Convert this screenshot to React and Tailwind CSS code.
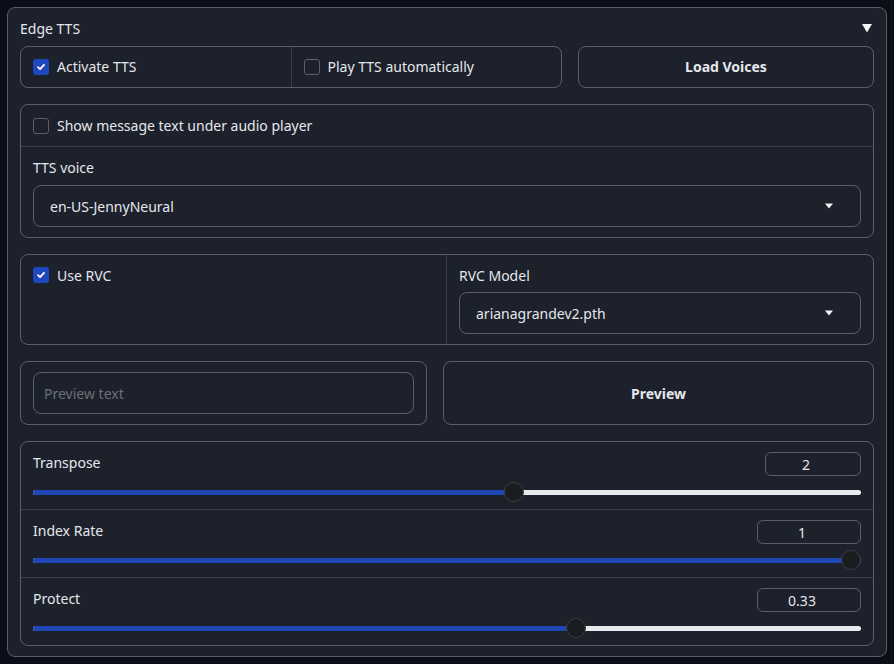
import React from 'react'

const font = { fontFamily: '"Noto Sans", "Open Sans", sans-serif' }

function Check({ on }) {
  return on ? (
    <span className="w-4 h-4 rounded-[3px] bg-[#1e47c0] flex items-center justify-center shrink-0">
      <svg width="10" height="10" viewBox="0 0 10 10">
        <path d="M2 5.2 L4.1 7.2 L8 2.8" stroke="#fff" strokeWidth="1.8" fill="none" strokeLinecap="round" strokeLinejoin="round" />
      </svg>
    </span>
  ) : (
    <span className="w-4 h-4 rounded-[3px] border border-[#5b6068] bg-[#1c212b] shrink-0" />
  )
}

function Select({ value }) {
  return (
    <div className="h-[42px] rounded-lg border border-[#5b6068] flex items-center justify-between px-4">
      <span>{value}</span>
      <svg width="10" height="6" viewBox="0 0 10 6" className="mr-[10px]">
        <path d="M1 0.5 L9 0.5 L5 5.5 Z" fill="#f3f4f6" />
      </svg>
    </div>
  )
}

function Slider({ label, value, p, inputW, last }) {
  return (
    <div className={'px-3 pt-[10px] pb-[7px] ' + (last ? '' : 'border-b border-[#3a3f47]')}>
      <div className="flex items-center justify-between h-6">
        <span className="-mt-1">{label}</span>
        <div className={'h-6 rounded-md border border-[#5b6068] flex items-center justify-center pr-[14px] ' + inputW}>
          {value}
        </div>
      </div>
      <div className="relative h-5 mt-[6px] flex items-center">
        <div className="w-full h-[5px] rounded-full bg-[#e8eaee] overflow-hidden">
          <div className="h-full bg-[#1e46b4]" style={{ width: `calc(10px + ${p} * (100% - 20px))` }} />
        </div>
        <div
          className="absolute top-0 w-5 h-5 rounded-full bg-[#1a1c1f] border border-[#3b3f45]"
          style={{ left: `calc(${p} * (100% - 20px))` }}
        />
      </div>
    </div>
  )
}

export default function App() {
  return (
    <div className="min-h-[664px] bg-[#0b0f19] p-[7px] text-[14px] text-[#e5e7eb]" style={font}>
      <div className="rounded-lg border border-[#5b6068] bg-[#1c212b] px-3 pt-[10px] pb-[10px]">
        {/* Header */}
        <div className="flex items-center justify-between h-5 mb-2">
          <span>Edge TTS</span>
          <svg width="12" height="10" viewBox="0 0 12 10" className="mr-[1px]">
            <path d="M1 1 L11 1 L6 9.5 Z" fill="#f3f4f6" />
          </svg>
        </div>

        <div className="flex flex-col gap-4">
          {/* Row 1 */}
          <div className="flex gap-[16px] h-[42px]">
            <div className="w-[542px] rounded-lg border border-[#5b6068] flex">
              <div className="flex-1 flex items-center gap-[8px] pl-3 border-r border-[#3a3f47]">
                <Check on />
                <span className="-mt-[1px]">Activate TTS</span>
              </div>
              <div className="flex-1 flex items-center gap-[8px] pl-3">
                <Check />
                <span className="-mt-[1px]">Play TTS automatically</span>
              </div>
            </div>
            <div className="flex-1 rounded-lg border border-[#5b6068] flex items-center justify-center font-bold">
              <span className="-mt-[1px]">Load Voices</span>
            </div>
          </div>

          {/* Row 2 */}
          <div className="rounded-lg border border-[#5b6068]">
            <div className="h-[42px] flex items-center gap-[8px] px-3 border-b border-[#3a3f47]">
              <Check />
              <span>Show message text under audio player</span>
            </div>
            <div className="px-3 pt-[10px] pb-[10px]">
              <div className="h-5 flex items-center mb-2">TTS voice</div>
              <Select value="en-US-JennyNeural" />
            </div>
          </div>

          {/* Row 3 */}
          <div className="rounded-lg border border-[#5b6068] flex">
            <div className="w-[426px] border-r border-[#3a3f47] px-3 pt-[12px] flex items-start gap-[8px]">
              <Check on />
              <span className="-mt-[2px]">Use RVC</span>
            </div>
            <div className="flex-1 px-3 pt-[10px] pb-[10px]">
              <div className="h-5 flex items-center mb-[7px]">RVC Model</div>
              <Select value="arianagrandev2.pth" />
            </div>
          </div>

          {/* Row 4 */}
          <div className="flex gap-[16px] h-[64px]">
            <div className="w-[407px] rounded-lg border border-[#5b6068] px-3 flex items-center">
              <div className="w-full h-[42px] rounded-lg border border-[#5b6068] flex items-center px-[10px] text-[#6b7078]">
                Preview text
              </div>
            </div>
            <div className="flex-1 rounded-lg border border-[#5b6068] flex items-center justify-center font-bold">
              Preview
            </div>
          </div>

          {/* Row 5 */}
          <div className="rounded-lg border border-[#5b6068]">
            <Slider label="Transpose" value="2" p={14 / 24} inputW="w-[96px]" />
            <Slider label="Index Rate" value="1" p={1} inputW="w-[104px]" />
            <Slider label="Protect" value="0.33" p={0.66} inputW="w-[104px]" last />
          </div>
        </div>
      </div>
    </div>
  )
}
